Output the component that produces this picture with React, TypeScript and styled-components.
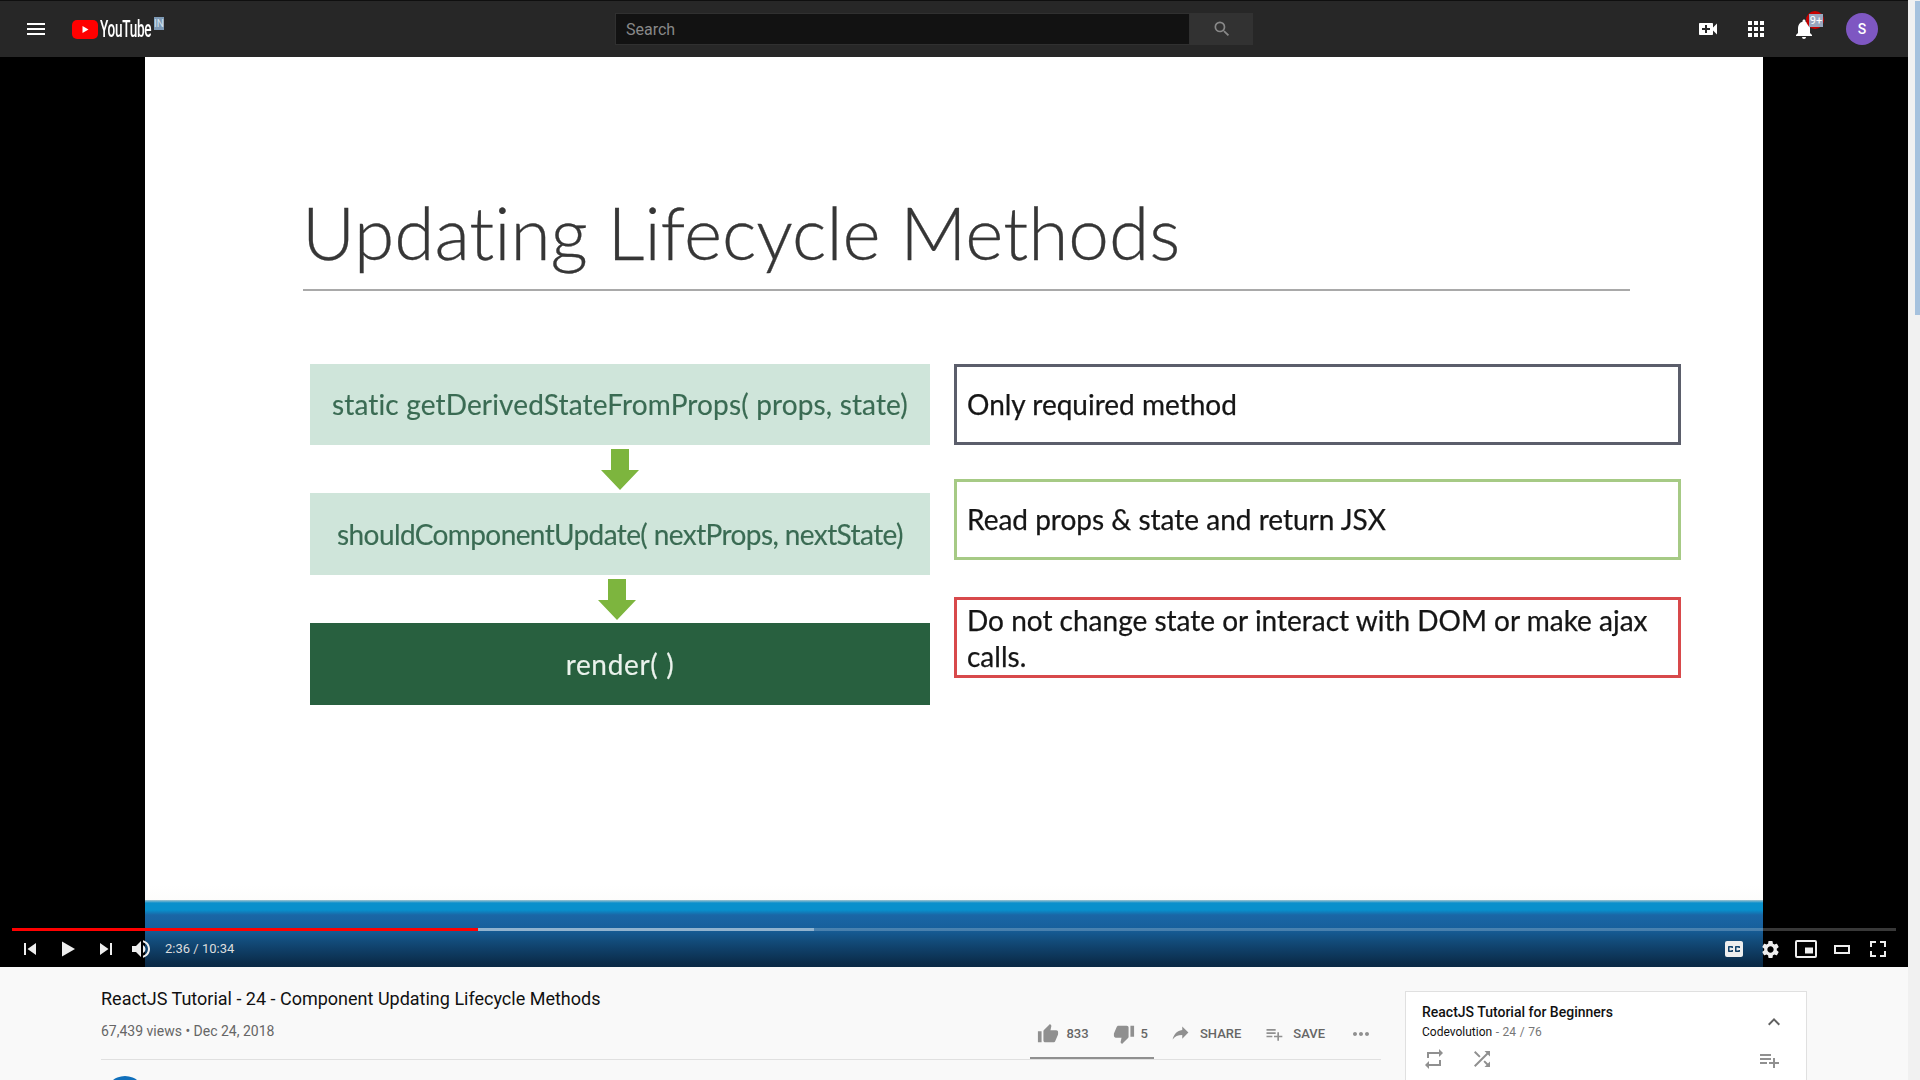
import React from "react";
import styled, { createGlobalStyle } from "styled-components";
import {
  MdMenu, MdVideoCall, MdApps, MdNotifications, MdSearch, MdVolumeUp, MdClosedCaption, MdSettings,
  MdThumbUp, MdThumbDown, MdReply, MdPlaylistAdd, MdMoreHoriz, MdRepeat, MdShuffle, MdExpandLess,
} from "react-icons/md";

const Global = createGlobalStyle`
  html, body { margin: 0; padding: 0; height: 1080px; overflow: hidden; background: #f9f9f9; }
  body { font-family: Roboto, "Liberation Sans", sans-serif; }
  * { box-sizing: border-box; }
`;

const Shell = styled.div`display: flex; width: 1920px; height: 1080px; overflow: hidden;`;
const Page = styled.div`width: 1908px; flex: none; height: 1080px; overflow: hidden; display: flex; flex-direction: column;`;
const ScrollTrack = styled.div`width: 12px; height: 1080px; background: #f1f1f1; padding: 1px 0 0 7px;`;
const ScrollThumb = styled.div`width: 5px; height: 314px; background: #a6c2de;`;

const Header = styled.header`
  height: 57px; flex: none; border-top: 1px solid #0f0f0f; background: #272727;
  display: grid; grid-template-columns: 615px 638px 1fr; align-items: center;
`;
const HeaderLeft = styled.div`display: flex; align-items: center; padding-left: 24px; color: #fff;`;
const LogoWrap = styled.div`position: relative; display: flex; align-items: center; margin-left: 24px; height: 24px;`;
const LogoMark = styled.svg`width: 26px; height: 19px; display: block; flex: none;`;
const LogoWord = styled.span`
  display: block; width: 52px; margin-left: 2px; padding-top: 2px; font-size: 23px; font-weight: 500; line-height: 24px;
  color: #fff; white-space: nowrap; letter-spacing: -0.5px; transform: scaleX(0.59); transform-origin: left center;
`;
const CountryTag = styled.span`
  position: absolute; left: 82px; top: 0; width: 10px; height: 13px; background: #7e9ab6; color: #d3e2ee;
  font-size: 10px; line-height: 13px; text-align: center;
`;
const SearchBar = styled.div`display: flex; height: 32px; width: 638px;`;
const SearchInput = styled.div`
  flex: 1; background: #121212; border: 1px solid #303030; color: #888; font-size: 16px; line-height: 31px; padding-left: 10px;
`;
const SearchButton = styled.div`
  width: 63px; background: #323232; color: #888; display: flex; align-items: center; justify-content: center;
`;
const HeaderRight = styled.div`display: flex; align-items: center; justify-content: flex-end; padding-right: 30px; color: #fff;`;
const IconSlot = styled.div`position: relative; width: 48px; height: 32px; display: flex; align-items: center; justify-content: center;`;
const BellDot = styled.span`position: absolute; left: 26px; top: -2px; width: 18px; height: 18px; border-radius: 50%; background: #c70000;`;
const BellCount = styled.span`
  position: absolute; left: 29px; top: 1px; width: 14px; height: 13px; background: #9aa7bf; color: #fff;
  font-size: 11px; line-height: 13px; text-align: center;
`;
const Avatar = styled.div`
  width: 32px; height: 32px; margin-left: 18px; border-radius: 50%; background: #7e57c2; color: #fff;
  font-size: 14px; line-height: 32px; text-align: center; font-weight: 500;
`;

const Video = styled.section`position: relative; height: 910px; flex: none; background: #000; display: flex; justify-content: center;`;
const Slide = styled.div`
  width: 1618px; height: 910px; display: flex; flex-direction: column;
  background: linear-gradient(#fff 91%, #f4f3ef 98%);
`;
const SlideBody = styled.div`flex: 1; font-family: Lato, "Open Sans", sans-serif; font-variant-ligatures: none;`;
const SlideTitle = styled.h1`
  margin: 0; padding: 129px 0 0 157px; height: 232px; font-weight: 300; font-size: 73px; line-height: 92px; color: #363636;
  white-space: nowrap; letter-spacing: -0.05px; -webkit-text-stroke: 0.3px #363636; filter: blur(0.3px);
`;
const SlideRule = styled.div`margin-left: 158px; width: 1327px; height: 2px; background: #a9a9a9;`;
const Columns = styled.div`display: grid; grid-template-columns: 620px 727px; column-gap: 24px; margin: 73px 0 0 165px;`;
const FlowColumn = styled.div`display: flex; flex-direction: column;`;
const StepBox = styled.div<{ $dark?: boolean; $h: number; $spacing: number; $lift?: number }>`
  height: ${(p) => p.$h}px; display: flex; align-items: center; justify-content: center; padding-bottom: ${(p) => p.$lift ?? 0}px;
  background: ${(p) => (p.$dark ? "#28603f" : "#cfe5da")};
  color: ${(p) => (p.$dark ? "#eaf2ec" : "#3a6b53")};
  font-size: 28px; white-space: nowrap; letter-spacing: ${(p) => p.$spacing}px; -webkit-text-stroke: 0.15px currentColor; filter: blur(0.3px);
`;
const ArrowRow = styled.div<{ $height: number; $shift: number }>`
  height: ${(p) => p.$height}px; display: flex; align-items: center; justify-content: center; padding-right: ${(p) => p.$shift}px;
`;
const Arrow = styled.svg`width: 38px; height: 41px; display: block;`;
const NoteColumn = styled.div`display: flex; flex-direction: column;`;
const NoteBox = styled.div<{ $color: string; $gap: number; $h: number; $lift: number }>`
  height: ${(p) => p.$h}px; margin-top: ${(p) => p.$gap}px; border: 3px solid ${(p) => p.$color};
  display: flex; align-items: center; padding: 0 10px ${(p) => p.$lift}px; background: #fff;
  color: #151515; font-size: 28px; line-height: 36px; letter-spacing: 0; -webkit-text-stroke: 0.25px #151515; filter: blur(0.25px);
`;
const Band = styled.div`
  height: 67px; flex: none;
  background: linear-gradient(#a4c4cf 0, #0a90cc 3px, #0890cc 10px, #1a66a6 15px, #17609c 28px, #124a78 42px, #0b2c4a 63px, #0a2945 67px);
`;

const Progress = styled.div`position: absolute; left: 12px; right: 12px; bottom: 36px; height: 3px; background: rgba(255,255,255,0.22);`;
const ProgressFill = styled.div<{ $w: number; $c: string }>`position: absolute; left: 0; top: 0; bottom: 0; width: ${(p) => p.$w}px; background: ${(p) => p.$c};`;
const Controls = styled.div`
  position: absolute; left: 0; right: 0; bottom: 0; height: 36px; padding: 0 12px 0 11px; display: flex; align-items: center; color: #eee;
`;
const CtlButton = styled.div<{ $w?: number }>`width: ${(p) => p.$w ?? 38}px; height: 36px; display: flex; align-items: center; justify-content: center; flex: none;`;
const CtlIcon = styled.svg`width: 24px; height: 24px; display: block; fill: currentColor;`;
const TimeText = styled.span`margin-left: 8px; padding-bottom: 1px; font-size: 13px; color: #ddd; white-space: nowrap;`;
const ControlSpacer = styled.div`flex: 1;`;

const Below = styled.div`flex: 1; display: flex; padding-left: 101px; min-height: 0; overflow: hidden;`;
const Primary = styled.div`width: 1280px; flex: none; padding-top: 20px;`;
const VideoTitle = styled.h2`margin: 0; font-size: 18px; font-weight: 400; line-height: 24px; color: #111;`;
const InfoRow = styled.div`display: flex; justify-content: space-between; height: 49px; border-bottom: 1px solid #e0e0e0;`;
const ViewCount = styled.div`font-size: 14px; line-height: 20px; padding-top: 10px; color: #666;`;
const Actions = styled.div`display: flex; align-items: stretch; color: #909090; padding-right: 8px;`;
const LikeGroup = styled.div`display: flex; align-items: center; padding: 0 6px 0 7px; border-bottom: 2px solid #909090; height: 48px; margin-bottom: -1px;`;
const ActionItem = styled.div<{ $ml?: number; $gap?: number }>`
  display: flex; align-items: center; margin-left: ${(p) => p.$ml ?? 0}px; gap: ${(p) => p.$gap ?? 0}px;
`;
const ActionLabel = styled.span`font-size: 13px; font-weight: 500; color: #666; line-height: 20px;`;
const ActionPlain = styled(ActionItem)`height: 46px;`;
const Flip = styled.span`display: flex; transform: scaleX(-1); margin-top: -4px;`;
const OwnerDot = styled.div`width: 40px; height: 40px; margin: 16px 0 0 4px; border-radius: 50%; background: #0f6fbb;`;

const PlaylistCard = styled.aside`
  width: 402px; height: 200px; margin: 24px 0 0 24px; flex: none; background: #fff; border: 1px solid #e0e0e0; padding: 10px 21px 0 16px;
`;
const CardTop = styled.div`display: flex; align-items: center; justify-content: space-between;`;
const CardTitle = styled.div`font-size: 14px; font-weight: 500; line-height: 20px; color: #111;`;
const CardSub = styled.div`font-size: 12px; line-height: 18px; padding-top: 1px; color: #111; word-spacing: 0.6px;`;
const Muted = styled.span`color: #767676;`;
const CardRow = styled.div`display: flex; align-items: center; justify-content: space-between; margin-top: 5px; padding-right: 4px; color: #909090;`;
const CardIcons = styled.div`display: flex; gap: 24px;`;
const Chevron = styled.div`color: #606060; display: flex; margin: 0 -1px 0 0;`;
const AddWrap = styled.div`display: flex; margin-top: 2px;`;

export default function App() {
  return (
    <>
      <Global />
      <Shell>
        <Page>
          <Header>
            <HeaderLeft>
              <MdMenu size={24} />
              <LogoWrap>
                <LogoMark viewBox="0 0 26 19">
                  <rect x="0" y="0" width="26" height="19" rx="5" fill="#f00" />
                  <path d="M10.5 6l6 3.5-6 3.5z" fill="#fff" />
                </LogoMark>
                <LogoWord>YouTube</LogoWord>
                <CountryTag>IN</CountryTag>
              </LogoWrap>
            </HeaderLeft>
            <SearchBar>
              <SearchInput>Search</SearchInput>
              <SearchButton><MdSearch size={20} /></SearchButton>
            </SearchBar>
            <HeaderRight>
              <IconSlot><MdVideoCall size={24} /></IconSlot>
              <IconSlot><MdApps size={24} /></IconSlot>
              <IconSlot>
                <MdNotifications size={24} />
                <BellDot />
                <BellCount>9+</BellCount>
              </IconSlot>
              <Avatar>S</Avatar>
            </HeaderRight>
          </Header>

          <Video>
            <Slide>
              <SlideBody>
                <SlideTitle>Updating Lifecycle Methods</SlideTitle>
                <SlideRule />
                <Columns>
                  <FlowColumn>
                    <StepBox $h={81} $spacing={0.14} $lift={2}>static getDerivedStateFromProps( props, state)</StepBox>
                    <ArrowRow $height={48} $shift={0}>
                      <Arrow viewBox="0 0 38 41"><path d="M10 0h18v21h10L19 41 0 21h10z" fill="#7db53e" /></Arrow>
                    </ArrowRow>
                    <StepBox $h={82} $spacing={-0.6}>shouldComponentUpdate( nextProps, nextState)</StepBox>
                    <ArrowRow $height={48} $shift={7}>
                      <Arrow viewBox="0 0 38 41"><path d="M10 0h18v21h10L19 41 0 21h10z" fill="#7db53e" /></Arrow>
                    </ArrowRow>
                    <StepBox $dark $h={82} $spacing={0.65}>render( )</StepBox>
                  </FlowColumn>
                  <NoteColumn>
                    <NoteBox $color="#5b5e6b" $gap={0} $h={81} $lift={2}>Only required method</NoteBox>
                    <NoteBox $color="#a6ca85" $gap={34} $h={81} $lift={2}>Read props &amp; state and return JSX</NoteBox>
                    <NoteBox $color="#d8494b" $gap={37} $h={81} $lift={0}>Do not change state or interact with DOM or make ajax calls.</NoteBox>
                  </NoteColumn>
                </Columns>
              </SlideBody>
              <Band />
            </Slide>
            <Progress>
              <ProgressFill $w={802} $c="rgba(255,255,255,0.4)" />
              <ProgressFill $w={466} $c="#f00" />
            </Progress>
            <Controls>
              <CtlButton><CtlIcon viewBox="0 0 24 24"><path d="M6 6h2v12H6zm3.5 6l8.5 6V6z" /></CtlIcon></CtlButton>
              <CtlButton><CtlIcon viewBox="0 0 24 24"><path d="M6 4.5L19 12 6 19.5z" /></CtlIcon></CtlButton>
              <CtlButton><CtlIcon viewBox="0 0 24 24"><path d="M6 18l8.5-6L6 6v12zM16 6v12h2V6h-2z" /></CtlIcon></CtlButton>
              <CtlButton $w={32}><MdVolumeUp size={24} /></CtlButton>
              <TimeText>2:36 / 10:34</TimeText>
              <ControlSpacer />
              <CtlButton $w={36}><MdClosedCaption size={24} /></CtlButton>
              <CtlButton $w={36}><MdSettings size={21} /></CtlButton>
              <CtlButton $w={36}>
                <CtlIcon viewBox="0 0 24 24">
                  <path d="M3 3h18a2 2 0 0 1 2 2v14a2 2 0 0 1-2 2H3a2 2 0 0 1-2-2V5a2 2 0 0 1 2-2zm0 2v14h18V5z" />
                  <path d="M11 10.5h8v6h-8z" />
                </CtlIcon>
              </CtlButton>
              <CtlButton $w={36}>
                <CtlIcon viewBox="0 0 24 24"><path d="M4 8h16v9H4zm2 2v5h12v-5z" fillRule="evenodd" /></CtlIcon>
              </CtlButton>
              <CtlButton $w={36}>
                <CtlIcon viewBox="0 0 24 24"><path d="M4 4h6v2H6v4H4zM14 4h6v6h-2V6h-4zM4 14h2v4h4v2H4zM18 14h2v6h-6v-2h4z" /></CtlIcon>
              </CtlButton>
            </Controls>
          </Video>

          <Below>
            <Primary>
              <VideoTitle>ReactJS Tutorial - 24 - Component Updating Lifecycle Methods</VideoTitle>
              <InfoRow>
                <ViewCount>67,439 views • Dec 24, 2018</ViewCount>
                <Actions>
                  <LikeGroup>
                    <ActionItem $gap={7}><MdThumbUp size={22} /><ActionLabel>833</ActionLabel></ActionItem>
                    <ActionItem $ml={24} $gap={6}><MdThumbDown size={22} /><ActionLabel>5</ActionLabel></ActionItem>
                  </LikeGroup>
                  <ActionPlain $ml={16} $gap={9}><Flip><MdReply size={21} /></Flip><ActionLabel>SHARE</ActionLabel></ActionPlain>
                  <ActionPlain $ml={23} $gap={9}><MdPlaylistAdd size={20} /><ActionLabel>SAVE</ActionLabel></ActionPlain>
                  <ActionPlain $ml={24}><MdMoreHoriz size={24} /></ActionPlain>
                </Actions>
              </InfoRow>
              <OwnerDot />
            </Primary>
            <PlaylistCard>
              <CardTop>
                <div>
                  <CardTitle>ReactJS Tutorial for Beginners</CardTitle>
                  <CardSub>Codevolution <Muted>- 24 / 76</Muted></CardSub>
                </div>
                <Chevron><MdExpandLess size={24} /></Chevron>
              </CardTop>
              <CardRow>
                <CardIcons><MdRepeat size={24} /><MdShuffle size={24} /></CardIcons>
                <AddWrap><MdPlaylistAdd size={24} /></AddWrap>
              </CardRow>
            </PlaylistCard>
          </Below>
        </Page>
        <ScrollTrack><ScrollThumb /></ScrollTrack>
      </Shell>
    </>
  );
}
